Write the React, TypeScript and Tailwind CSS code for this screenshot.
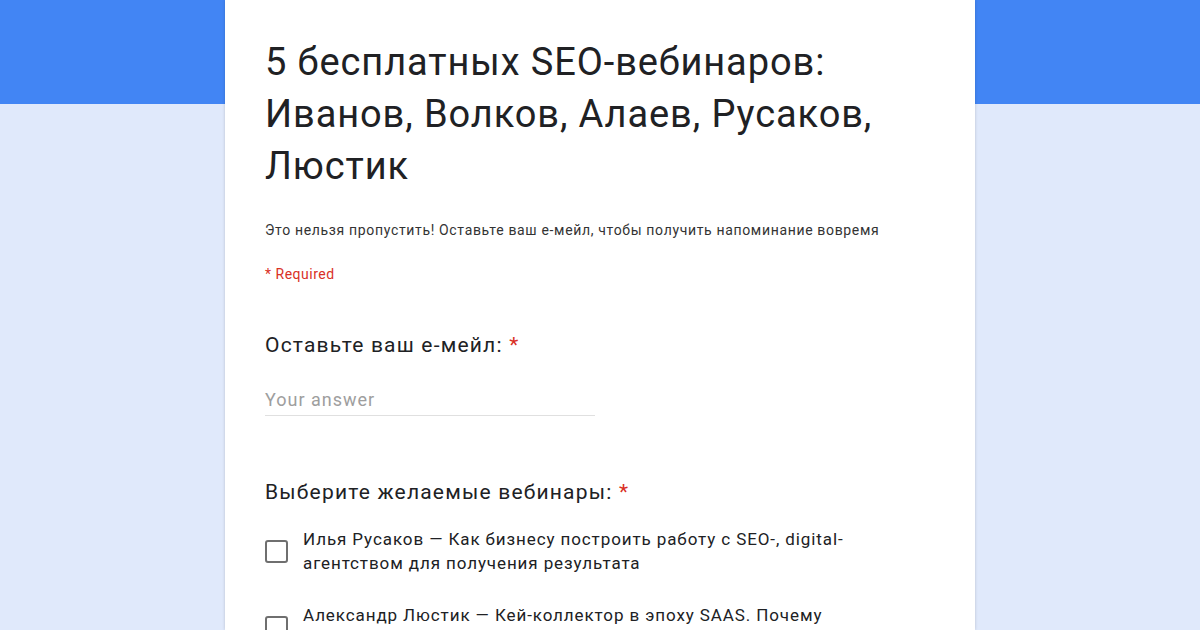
const options = [
  "Илья Русаков — Как бизнесу построить работу с SEO-, digital-агентством для получения результата",
  "Александр Люстик — Кей-коллектор в эпоху SAAS. Почему стоит использовать программу в 2018 году",
];

const Question = (props: { title: string; children: React.ReactNode }) => {
  return (
    <div>
      <div className="text-[21px] leading-[28px] tracking-[1.2px] text-[#202124]">
        {props.title} <span className="text-[#d93025]">*</span>
      </div>
      {props.children}
    </div>
  );
};

export default function App() {
  return (
    <div className="h-[630px] overflow-hidden bg-[linear-gradient(#4285f4_0_104px,#e0e9fb_104px)] font-['Roboto',sans-serif]">
      <div className="mx-auto h-[630px] w-[750px] bg-white px-10 pt-[36px] shadow-[0_0_3px_rgba(0,0,0,0.18)]">
        <h1 className="text-[38px] leading-[52px] tracking-[0.9px] text-[#202124]">
          5 бесплатных SEO-вебинаров: Иванов, Волков, Алаев, Русаков, Люстик
        </h1>
        <p className="mt-[28px] text-[14px] leading-[20px] tracking-[0.66px] text-[#333]">
          Это нельзя пропустить! Оставьте ваш е-мейл, чтобы получить напоминание вовремя
        </p>
        <p className="mt-[24px] text-[14px] leading-[20px] tracking-[0.5px] text-[#d93025]">* Required</p>

        <div className="mt-[47px]">
          <Question title="Оставьте ваш е-мейл:">
            <div className="mt-[29px] w-[330px] border-b border-[#e0e0e0] pb-[3px] text-[18px] leading-[24px] tracking-[1px] text-[#9e9e9e]">
              Your answer
            </div>
          </Question>
        </div>

        <div className="mt-[62px]">
          <Question title="Выберите желаемые вебинары:">
            <div className="mt-[21px] flex flex-col gap-[28px]">
              {options.map((o) => (
                <div key={o} className="flex items-center gap-[15px]">
                  <div className="h-[23px] w-[23px] shrink-0 rounded-[3px] border-2 border-[#6f6f6f]" />
                  <div className="w-[560px] text-[17px] leading-[24px] tracking-[0.9px] text-[#202124]">{o}</div>
                </div>
              ))}
            </div>
          </Question>
        </div>
      </div>
    </div>
  );
}
